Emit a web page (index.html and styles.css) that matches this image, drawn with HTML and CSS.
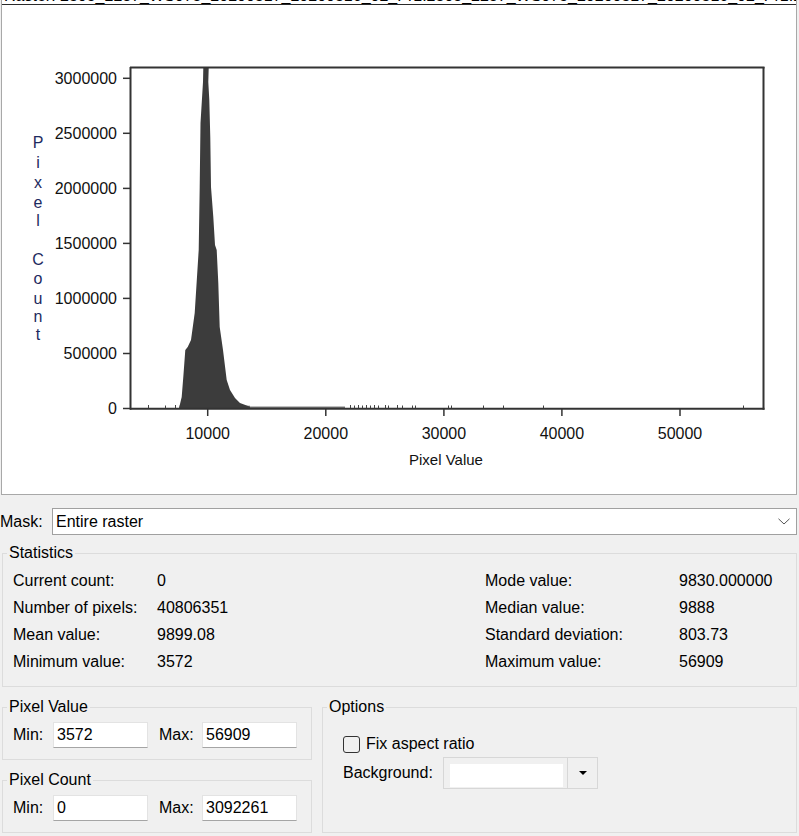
FILE: index.html
```html
<!DOCTYPE html>
<html>
<head>
<meta charset="utf-8">
<link rel="stylesheet" href="styles.css">
</head>
<body>
<div class="plot-panel">
  <div class="plot-title"><span>Raster: 2305_2287_WS075_20200317_20200316_02_Pr1.2305_2287_WS075_20200317_20200316_02_Pr1.2305_2287</span></div>
  <svg class="chart" width="794" height="489" viewBox="2 5 794 489">
    <!-- histogram -->
    <rect x="179" y="405.5" width="71" height="2.5" fill="#b4b4b4"/>
    <path d="M179 408 L179.3 407 L181.7 397 L183.3 377 L185.3 350 L187.7 347 L191 340 L194.7 313 L198.7 250 L199.7 187 L200.5 123 L203 82 L203.3 68 L208.7 68 L208.3 82 L209.3 100 L210.3 138 L211 187 L213.3 217 L215 245 L216.7 250 L218.3 283 L219.7 327 L223 350 L226.7 380 L230 390 L235 398 L240 403 L248 406 L250 406.5 L250 408 Z" fill="#3c3c3c"/>
    <line x1="250" y1="407.2" x2="345" y2="407.2" stroke="#333" stroke-width="1"/>
    <g stroke="#444" stroke-width="1">
      <line x1="148.5" y1="405" x2="148.5" y2="408"/>
      <line x1="165.5" y1="405.5" x2="165.5" y2="408"/>
      <line x1="175.5" y1="405" x2="175.5" y2="408"/>
      <line x1="350.5" y1="405" x2="350.5" y2="408"/>
      <line x1="354.5" y1="405.5" x2="354.5" y2="408"/>
      <line x1="358.5" y1="405" x2="358.5" y2="408"/>
      <line x1="362.5" y1="405.5" x2="362.5" y2="408"/>
      <line x1="366.5" y1="405" x2="366.5" y2="408"/>
      <line x1="370.5" y1="405.5" x2="370.5" y2="408"/>
      <line x1="374.5" y1="405" x2="374.5" y2="408"/>
      <line x1="378.5" y1="405.5" x2="378.5" y2="408"/>
      <line x1="385.5" y1="405" x2="385.5" y2="408"/>
      <line x1="388.5" y1="405.5" x2="388.5" y2="408"/>
      <line x1="397.5" y1="405" x2="397.5" y2="408"/>
      <line x1="402.5" y1="405.5" x2="402.5" y2="408"/>
      <line x1="412.5" y1="405.5" x2="412.5" y2="408"/>
      <line x1="415.5" y1="405.5" x2="415.5" y2="408"/>
      <line x1="448.5" y1="405.5" x2="448.5" y2="408"/>
      <line x1="451.5" y1="405.5" x2="451.5" y2="408"/>
      <line x1="483.5" y1="405.5" x2="483.5" y2="408"/>
      <line x1="503.5" y1="405.5" x2="503.5" y2="408"/>
      <line x1="543.5" y1="405.5" x2="543.5" y2="408"/>
      <line x1="743.5" y1="405.5" x2="743.5" y2="408"/>
    </g>
    <!-- frame -->
    <g stroke="#333" stroke-width="2" fill="none">
      <line x1="130" y1="67.5" x2="764.5" y2="67.5"/>
      <line x1="130.5" y1="67" x2="130.5" y2="409.7"/>
      <line x1="763.5" y1="67" x2="763.5" y2="409.7"/>
      <line x1="130" y1="408.7" x2="764.5" y2="408.7"/>
    </g>
    <!-- y ticks -->
    <g stroke="#333" stroke-width="1.5">
      <line x1="123" y1="408.5" x2="130" y2="408.5"/>
      <line x1="123" y1="353.5" x2="130" y2="353.5"/>
      <line x1="123" y1="298.4" x2="130" y2="298.4"/>
      <line x1="123" y1="243.4" x2="130" y2="243.4"/>
      <line x1="123" y1="188.4" x2="130" y2="188.4"/>
      <line x1="123" y1="133.3" x2="130" y2="133.3"/>
      <line x1="123" y1="78.3" x2="130" y2="78.3"/>
      <line x1="207.7" y1="409" x2="207.7" y2="416"/>
      <line x1="325.8" y1="409" x2="325.8" y2="416"/>
      <line x1="443.9" y1="409" x2="443.9" y2="416"/>
      <line x1="561.9" y1="409" x2="561.9" y2="416"/>
      <line x1="680" y1="409" x2="680" y2="416"/>
    </g>
    <g class="axis-text" text-anchor="end">
      <text x="117" y="414.3">0</text>
      <text x="117" y="359.3">500000</text>
      <text x="117" y="304.2">1000000</text>
      <text x="117" y="249.2">1500000</text>
      <text x="117" y="194.2">2000000</text>
      <text x="117" y="139.1">2500000</text>
      <text x="117" y="84.1">3000000</text>
    </g>
    <g class="axis-text" text-anchor="middle">
      <text x="207.7" y="439">10000</text>
      <text x="325.8" y="439">20000</text>
      <text x="443.9" y="439">30000</text>
      <text x="561.9" y="439">40000</text>
      <text x="680" y="439">50000</text>
      <text class="axis-title" x="446" y="465">Pixel Value</text>
    </g>
    <g class="axis-text ytitle" text-anchor="middle">
      <text x="38" y="147.5">P</text>
      <text x="38" y="167.5">i</text>
      <text x="38" y="188">x</text>
      <text x="38" y="207.5">e</text>
      <text x="38" y="226">l</text>
      <text x="38" y="265">C</text>
      <text x="38" y="283.5">o</text>
      <text x="38" y="303.5">u</text>
      <text x="38" y="322">n</text>
      <text x="38" y="340">t</text>
    </g>
  </svg>
</div>

<div class="mask-row">
  <span class="mask-label">Mask:</span>
  <div class="combo">
    <span class="combo-text">Entire raster</span>
    <svg class="chevron" width="12" height="7" viewBox="0 0 12 7"><polyline points="0.5,0.8 6,6 11.5,0.8" fill="none" stroke="#555" stroke-width="1"/></svg>
  </div>
</div>

<fieldset class="group stats">
  <legend>Statistics</legend>
  <div class="stats-grid">
    <span>Current count:</span><span>0</span><span>Mode value:</span><span>9830.000000</span>
    <span>Number of pixels:</span><span>40806351</span><span>Median value:</span><span>9888</span>
    <span>Mean value:</span><span>9899.08</span><span>Standard deviation:</span><span>803.73</span>
    <span>Minimum value:</span><span>3572</span><span>Maximum value:</span><span>56909</span>
  </div>
</fieldset>

<div class="bottom-row">
  <div class="left-col">
    <fieldset class="group range">
      <legend>Pixel Value</legend>
      <div class="range-row">
        <span class="lbl-min">Min:</span><div class="field">3572</div>
        <span class="lbl-max">Max:</span><div class="field">56909</div>
      </div>
    </fieldset>
    <fieldset class="group range">
      <legend>Pixel Count</legend>
      <div class="range-row">
        <span class="lbl-min">Min:</span><div class="field">0</div>
        <span class="lbl-max">Max:</span><div class="field">3092261</div>
      </div>
    </fieldset>
  </div>
  <fieldset class="group options">
    <legend>Options</legend>
    <div class="opt-body">
      <div class="check-row"><span class="checkbox"></span><span>Fix aspect ratio</span></div>
      <div class="bg-row">
        <span class="bg-label">Background:</span>
        <div class="color-pick"><span class="swatch"></span><span class="arrow-cell"><span class="arrow"></span></span></div>
      </div>
    </div>
  </fieldset>
</div>
</body>
</html>
```

FILE: styles.css
```css
html, body {
  margin: 0;
  padding: 0;
}
body {
  background: #f0f0f0;
  font-family: "Liberation Sans", Arial, sans-serif;
  font-size: 16px;
  color: #000;
  width: 799px;
  height: 836px;
  overflow: hidden;
}

.plot-panel {
  margin: 0 2px 0 1px;
  background: #fff;
  border: 1px solid #a8a8a8;
  border-top: 0;
}
.plot-title {
  height: 4px;
  overflow: hidden;
  border-bottom: 1px solid #2a2a2a;
  padding-left: 2px;
  white-space: nowrap;
  line-height: 16px;
}
.plot-title span {
  display: block;
  margin-top: -12px;
}
.chart {
  display: block;
}
.axis-text text {
  font-family: "Liberation Sans", Arial, sans-serif;
  font-size: 16px;
  fill: #111;
}
.axis-text .axis-title {
  font-size: 15px;
}
.ytitle text {
  fill: #1d2a5e;
}

.mask-row {
  display: flex;
  align-items: center;
  margin: 13px 2px 0 0;
  height: 27px;
}
.mask-label {
  width: 52px;
}
.combo {
  flex: 1;
  height: 27px;
  box-sizing: border-box;
  border: 1px solid #a0a0a0;
  background: #fff;
  display: flex;
  align-items: center;
  padding: 0 6px 0 3px;
}
.combo-text {
  flex: 1;
}
.chevron {
  display: block;
}

.group {
  border: 1px solid #dcdcdc;
  margin: 0;
  min-width: 0;
}
.group legend {
  padding: 0 2px;
  line-height: 16px;
}
.stats {
  margin: 10px 2px 0 2px;
  padding: 6px 0 11px 4px;
}
.stats-grid {
  display: grid;
  grid-template-columns: 144px 328px 194px 1fr;
  padding-left: 6px;
  line-height: 27px;
}

.bottom-row {
  display: flex;
  gap: 10px;
  margin: 12px 2px 0 2px;
}
.left-col {
  width: 310px;
  display: flex;
  flex-direction: column;
  gap: 12px;
}
.range {
  padding: 7px 0 11px 4px;
}
.range-row {
  display: flex;
  align-items: center;
  padding-left: 6px;
}
.lbl-min {
  width: 40px;
}
.lbl-max {
  width: 43px;
  margin-left: 11px;
}
.field {
  width: 95px;
  height: 26px;
  box-sizing: border-box;
  background: #fff;
  border: 1px solid #e3e3e3;
  border-bottom-color: #a5a5a5;
  padding-left: 3px;
  line-height: 24px;
}
.options {
  flex: 1;
  padding: 7px 0 0 4px;
}
.opt-body {
  padding: 12px 0 0 16px;
}
.check-row {
  display: flex;
  align-items: center;
  height: 20px;
  gap: 6px;
}
.checkbox {
  width: 17px;
  height: 17px;
  box-sizing: border-box;
  border: 1.5px solid #333;
  border-radius: 3px;
}
.bg-row {
  display: flex;
  align-items: center;
  margin-top: 3px;
}
.bg-label {
  width: 100px;
}
.color-pick {
  display: flex;
  width: 155px;
  height: 32px;
  box-sizing: border-box;
  border: 1px solid #d7d7d7;
}
.swatch {
  width: 113px;
  margin: 6px 0 1px 6px;
  background: #fff;
}
.arrow-cell {
  flex: 1;
  margin-left: 4px;
  border-left: 1px solid #d7d7d7;
  display: flex;
  align-items: center;
  justify-content: center;
}
.arrow {
  width: 0;
  height: 0;
  border-left: 4px solid transparent;
  border-right: 4px solid transparent;
  border-top: 4px solid #000;
}
```
